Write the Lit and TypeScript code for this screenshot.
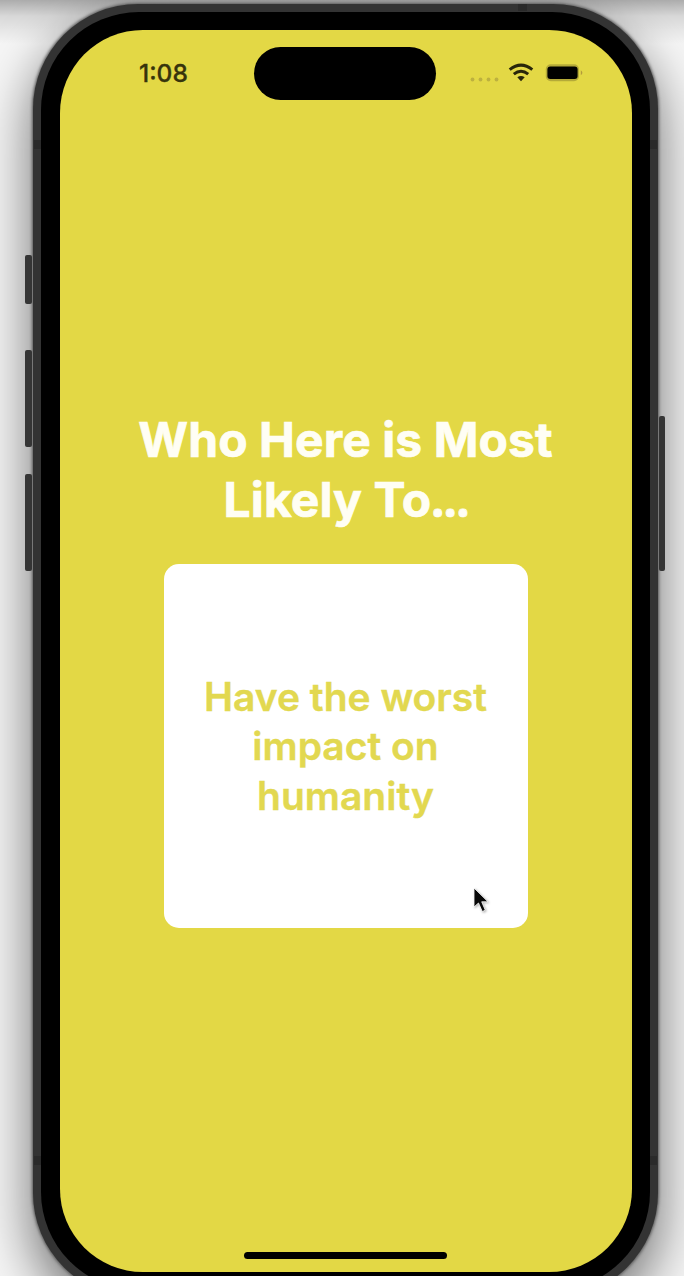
import { LitElement, html, css } from "lit";
import { customElement, property } from "lit/decorators.js";

@customElement("status-bar")
class StatusBar extends LitElement {
  @property() time = "";

  static styles = css`
    :host {
      display: grid;
      grid-template-columns: 194px 182px 1fr;
      height: 54px;
      align-items: center;
    }
    .time {
      padding-left: 79px;
      font-size: 24.5px;
      line-height: 30px;
      font-weight: 500;
      letter-spacing: 0;
      color: #37340c;
      -webkit-text-stroke: 0.3px #37340c;
    }
    .island {
      height: 53px;
      border-radius: 27px;
      background: #000;
    }
    .icons {
      display: block;
      width: 120px;
      height: 30px;
      margin-left: 32px;
    }
  `;

  render() {
    return html`
      <div class="time">${this.time}</div>
      <div class="island"></div>
      <svg class="icons" viewBox="0 0 120 30">
        <g fill="#bdb13f">
          <circle cx="4.5" cy="21.5" r="1.9" />
          <circle cx="12.5" cy="21.5" r="1.9" />
          <circle cx="20.5" cy="21.5" r="1.9" />
          <circle cx="28.5" cy="21.5" r="1.9" />
        </g>
        <g fill="none" stroke="#29260a" stroke-width="3">
          <path d="M41.7 11.7Q53 2.5 64.3 11.7" />
          <path d="M45.8 16.1Q53 10.3 60.2 16.1" />
        </g>
        <path d="M49.3 19.2Q53 16.8 56.7 19.2L53 23.2Z" fill="#29260a" />
        <rect x="77.8" y="6.2" width="33.2" height="17" rx="5" fill="#b5aa38" />
        <rect x="79.4" y="8.4" width="30.2" height="12.6" rx="3" />
        <path d="M112.8 12.2Q116 14.7 112.8 17.2Z" fill="#b39b3c" />
      </svg>
    `;
  }
}

@customElement("app-root")
class AppRoot extends LitElement {
  static styles = css`
    :host {
      display: block;
      width: 684px;
      height: 1276px;
      overflow: hidden;
      position: relative;
      box-sizing: border-box;
      padding: 4px 0 0 33px;
      font-family: Inter, "Liberation Sans", sans-serif;
      background:
        linear-gradient(rgba(0, 0, 0, 0.3), rgba(0, 0, 0, 0.12) 16px, rgba(0, 0, 0, 0) 44px),
        #f6f6f6;
    }
    .frame {
      position: relative;
      box-sizing: border-box;
      width: 625px;
      height: 1294px;
      padding: 8px;
      border-radius: 105px;
      background: #333;
      box-shadow: 0 0 3px 1px #5a5a5a, 0 22px 52px 3px rgba(0, 0, 0, 0.52);
    }
    .bezel {
      box-sizing: border-box;
      height: 1278px;
      padding: 18px 18px 18px 19px;
      border-radius: 98px;
      background: #000;
    }
    .screen {
      display: flex;
      flex-direction: column;
      align-items: center;
      box-sizing: border-box;
      width: 572px;
      height: 1242px;
      padding: 16px 0 13px;
      border-radius: 83px;
      background: #e3d845;
    }
    status-bar {
      width: 572px;
    }
    .prompt {
      flex: 1;
      display: flex;
      flex-direction: column;
      align-items: center;
      padding-top: 310px;
      text-align: center;
    }
    .title {
      margin: 0 1px 0 0;
      width: 440px;
      font-size: 48px;
      line-height: 60px;
      letter-spacing: 0.08px;
      font-weight: 700;
      color: #fffef4;
      -webkit-text-stroke: 0.7px #fffef4;
    }
    .dots {
      letter-spacing: -3.5px;
      margin-left: -1.5px;
    }
    .card {
      display: flex;
      align-items: center;
      justify-content: center;
      box-sizing: border-box;
      width: 364px;
      height: 364px;
      margin-top: 34px;
      padding-right: 1px;
      border-radius: 15px;
      background: #fff;
      font-size: 39px;
      line-height: 49.5px;
      font-weight: 600;
      color: #e2d850;
      text-align: center;
      -webkit-text-stroke: 0.4px #e2d850;
    }
    .home {
      width: 203px;
      height: 7px;
      margin-right: 1px;
      border-radius: 4px;
      background: #000;
    }
    .key {
      position: absolute;
      width: 7px;
      border-radius: 2px;
      background: #353535;
    }
    .mute { left: -8px; top: 251px; height: 49px; }
    .up { left: -8px; top: 346px; height: 97px; }
    .down { left: -8px; top: 470px; height: 97px; }
    .power { left: 626px; top: 412px; height: 155px; width: 6px; }
    .seam {
      position: absolute;
      width: 7px;
      height: 9px;
      background: #2a2a2a;
    }
    .seam-left { left: 1px; top: 136px; }
    .seam-right { left: 617px; top: 136px; }
    .seam-low-left { left: 1px; top: 1152px; }
    .seam-low-right { left: 617px; top: 1152px; }
    .seam-top { left: 485px; top: 0; width: 9px; height: 7px; }
    .pointer {
      position: absolute;
      left: 471px;
      top: 885px;
      width: 22px;
      height: 32px;
      filter: drop-shadow(1px 1px 1px rgba(0, 0, 0, 0.3));
    }
  `;

  render() {
    return html`
      <div class="frame">
        <div class="bezel">
          <div class="screen">
            <status-bar time="1:08"></status-bar>
            <div class="prompt">
              <h1 class="title">Who Here is Most<br />Likely To<span class="dots">...</span></h1>
              <div class="card"><div>Have the worst<br />impact on<br />humanity</div></div>
            </div>
            <div class="home"></div>
          </div>
        </div>
        <div class="key mute"></div>
        <div class="key up"></div>
        <div class="key down"></div>
        <div class="key power"></div>
        <div class="seam seam-left"></div>
        <div class="seam seam-right"></div>
        <div class="seam seam-low-left"></div>
        <div class="seam seam-low-right"></div>
        <div class="seam seam-top"></div>
      </div>
      <svg class="pointer" viewBox="0 0 22 32">
        <path
          d="M3 3V22L7.5 18L11.3 26.5L14.3 25.2L10.7 16.8H17Z"
          fill="#080808"
          stroke="#fff"
          stroke-width="0.8"
        />
      </svg>
    `;
  }
}
